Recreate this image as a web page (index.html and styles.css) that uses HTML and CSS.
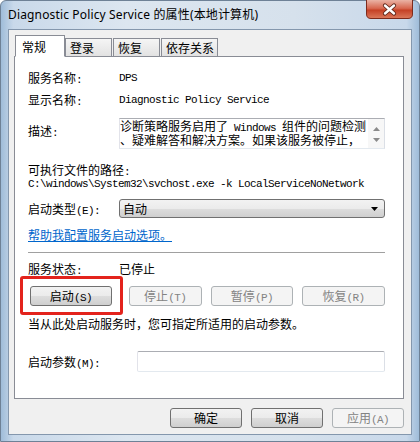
FILE: index.html
```html
<!DOCTYPE html>
<html lang="zh-CN">
  <head>
    <meta charset="UTF-8" />
    <title>Diagnostic Policy Service 的属性(本地计算机)</title>
    <link rel="stylesheet" href="styles.css">
  </head>
  <body>
    <div class="window">
      <div class="titlebar">
        <span class="caption">Diagnostic Policy Service 的属性(本地计算机)</span>
        <div class="close">
          <svg width="47" height="19" viewBox="0 0 47 19">
            <defs>
              <linearGradient id="cg" x1="0" y1="0" x2="0" y2="1">
                <stop offset="0" stop-color="#eab3a5" />
                <stop offset="0.45" stop-color="#d7674f" />
                <stop offset="0.55" stop-color="#c54126" />
                <stop offset="1" stop-color="#dc7a5c" />
              </linearGradient>
            </defs>
            <path d="M0.5 0 V14 Q0.5 18.5 5 18.5 H42 Q46.5 18.5 46.5 14 V0" fill="url(#cg)" stroke="#7d2b1c" />
            <path d="M19 5.5 L28 13.5 M28 5.5 L19 13.5" stroke="#5a2418" stroke-width="4.2" stroke-linecap="round" />
            <path d="M19 5.5 L28 13.5 M28 5.5 L19 13.5" stroke="#fff" stroke-width="2.4" stroke-linecap="round" />
          </svg>
        </div>
      </div>

      <div class="client">
        <div class="tabs">
          <div class="tab active">常规</div>
          <div class="tab">登录</div>
          <div class="tab">恢复</div>
          <div class="tab">依存关系</div>
        </div>

        <div class="panel">
          <div class="row row-name">
            <span class="label">服务名称<span class="en">:</span></span>
            <span class="en">DPS</span>
          </div>
          <div class="row row-display">
            <span class="label">显示名称<span class="en">:</span></span>
            <span class="en">Diagnostic Policy Service</span>
          </div>
          <div class="row row-desc">
            <span class="label desc-label">描述<span class="en">:</span></span>
            <div class="textbox">
              <div class="desc-text">
                <div class="desc-line">诊断策略服务启用了<span class="en"> Windows </span>组件的问题检测</div>
                <div class="desc-line">、疑难解答和解决方案。如果该服务被停止，</div>
              </div>
              <div class="scroll">
                <svg width="7" height="4" viewBox="0 0 7 4"><path d="M0 4 L3.5 0 L7 4 Z" fill="#8a8a8a" /></svg>
                <svg width="7" height="4" viewBox="0 0 7 4"><path d="M0 0 L3.5 4 L7 0 Z" fill="#8a8a8a" /></svg>
              </div>
            </div>
          </div>
          <div class="path-label">可执行文件的路径<span class="en">:</span></div>
          <div class="path en">C:\windows\System32\svchost.exe -k LocalServiceNoNetwork</div>
          <div class="row row-type">
            <span class="label">启动类型<span class="en">(E):</span></span>
            <div class="select">
              <span>自动</span>
              <svg width="7" height="4" viewBox="0 0 7 4"><path d="M0 0 L3.5 4 L7 0 Z" fill="#000" /></svg>
            </div>
          </div>
          <a class="help" href="#">帮助我配置服务启动选项。</a>
          <div class="sep"></div>
          <div class="row row-status">
            <span class="label">服务状态<span class="en">:</span></span>
            <span>已停止</span>
          </div>
          <div class="btn-row">
            <button class="btn b-start">启动<span class="en">(S)</span></button>
            <button class="btn b-stop" disabled>停止<span class="en">(T)</span></button>
            <button class="btn b-pause" disabled>暂停<span class="en">(P)</span></button>
            <button class="btn b-resume" disabled>恢复<span class="en">(R)</span></button>
            <div class="mark"></div>
          </div>
          <div class="note">当从此处启动服务时，您可指定所适用的启动参数。</div>
          <div class="row row-params">
            <span class="label params-label">启动参数<span class="en">(M):</span></span>
            <div class="input"></div>
          </div>
        </div>

        <div class="footer">
          <button class="btn">确定</button>
          <button class="btn">取消</button>
          <button class="btn" disabled>应用<span class="en">(A)</span></button>
        </div>
      </div>
    </div>
  </body>
</html>
```

FILE: styles.css
```css
* {
  box-sizing: border-box;
}
body {
  margin: 0;
  font-family: "Noto Sans CJK SC", sans-serif;
  font-size: 12px;
  color: #000;
}
.en {
  font-family: "Liberation Mono", monospace;
  font-size: 11px;
  letter-spacing: -0.6px;
  line-height: 10px;
}
.window {
  width: 420px;
  height: 442px;
  display: flex;
  flex-direction: column;
  padding: 0 7px 6px 7px;
  border: 1px solid #6e8196;
  border-radius: 6px 6px 0 0;
  background: linear-gradient(90deg, #9fbcd9 0, #c9d9ea 3%, #dce6f0 30%, #d6e1ec 70%, #c8d8ea 97%, #9fbcd9 100%);
}
.titlebar {
  height: 28px;
  display: flex;
  justify-content: space-between;
  align-items: flex-start;
}
.caption {
  font-family: "Noto Sans", "Noto Sans CJK SC", sans-serif;
  font-size: 12px;
  line-height: 28px;
  letter-spacing: 0.15px;
}
.close {
  margin-top: -1px;
  margin-right: -1px;
  height: 19px;
}
.close svg {
  display: block;
}
.client {
  flex: 1;
  background: #f0f0f0;
  border: 1px solid #8497ad;
  padding: 5px 7px 0 5px;
}
.tabs {
  display: flex;
  align-items: flex-end;
  height: 22px;
  padding-left: 1px;
  margin-bottom: -1px;
  position: relative;
  z-index: 1;
}
.tab {
  height: 19px;
  min-width: 47px;
  padding: 0 3px 0 4px;
  margin-left: 1px;
  line-height: 17px;
  border: 1px solid #898c95;
  background: linear-gradient(#f5f5f5, #e2e2e2);
}
.tab.active {
  height: 22px;
  min-width: 50px;
  padding-left: 6px;
  margin-left: 0;
  line-height: 21px;
  border-bottom-color: #fff;
  background: #fff;
}
.tab.active + .tab {
  margin-left: 0;
}
.panel {
  height: 343px;
  background: #fff;
  border: 1px solid #898c95;
  padding: 13px 18px 0 13px;
  display: flex;
  flex-direction: column;
}
.row {
  display: flex;
  align-items: center;
  height: 16px;
  line-height: 16px;
  flex: none;
}
.label {
  width: 91px;
  flex: none;
}
.row-display {
  margin-top: 6px;
}
.row-desc {
  margin-top: 10px;
  height: 31px;
  align-items: flex-start;
}
.desc-label {
  padding-top: 5px;
}
.textbox {
  width: 266px;
  height: 31px;
  display: flex;
  border: 1px solid #abadb3;
  border-left-color: #e2e3ea;
  border-right-color: #dbdfe6;
  border-bottom-color: #e3e9ef;
  background: #fff;
}
.desc-text {
  flex: 1;
  white-space: nowrap;
}
.desc-line {
  height: 14px;
  line-height: 14px;
}
.scroll {
  width: 16px;
  display: flex;
  flex-direction: column;
  justify-content: space-between;
  align-items: center;
  padding: 8px 0 6px;
  background: #f7f7f7;
}
.scroll svg {
  display: block;
}
.path-label {
  margin-top: 14px;
  height: 14px;
  line-height: 14px;
  flex: none;
}
.path {
  height: 14px;
  line-height: 14px;
  white-space: nowrap;
  flex: none;
}
.row-type {
  margin-top: 8px;
  height: 19px;
}
.select {
  width: 266px;
  height: 19px;
  display: flex;
  justify-content: space-between;
  align-items: center;
  padding: 0 6px 0 3px;
  border: 1px solid #707070;
  border-radius: 3px;
  background: linear-gradient(#f2f2f2, #ebebeb 50%, #dddddd 51%, #cfcfcf);
}
.help {
  margin-top: 9px;
  height: 16px;
  line-height: 16px;
  color: #0066cc;
  align-self: flex-start;
}
.sep {
  margin-top: 9px;
  height: 2px;
  flex: none;
  border-top: 1px solid #a0a0a0;
  border-bottom: 1px solid #fff;
}
.row-status {
  margin-top: 7px;
}
.btn-row {
  margin-top: 9px;
  display: flex;
  position: relative;
  flex: none;
}
.btn {
  height: 20px;
  padding: 0;
  font-family: inherit;
  font-size: 12px;
  line-height: 16px;
  color: #000;
  border: 1px solid #707070;
  border-radius: 3px;
  background: linear-gradient(#f2f2f2, #ebebeb 50%, #dddddd 51%, #cfcfcf);
}
.btn[disabled] {
  color: #838383;
  border-color: #adb2b5;
  background: #f4f4f4;
}
.b-start {
  width: 82px;
  margin-left: 2px;
}
.b-stop {
  width: 73px;
  margin-left: 17px;
}
.b-pause {
  width: 83px;
  margin-left: 9px;
}
.b-resume {
  width: 83px;
  margin-left: 9px;
}
.mark {
  position: absolute;
  left: -8px;
  top: -10px;
  width: 103px;
  height: 39px;
  border: 3px solid #e3231c;
  border-radius: 3px;
}
.note {
  margin-top: 10px;
  height: 16px;
  line-height: 16px;
  flex: none;
}
.row-params {
  margin-top: 19px;
  height: 21px;
}
.params-label {
  width: 109px;
}
.input {
  width: 249px;
  height: 21px;
  border: 1px solid #abadb3;
  border-left-color: #e2e3ea;
  border-right-color: #dbdfe6;
  border-bottom-color: #e3e9ef;
  border-radius: 2px;
}
.footer {
  margin-top: 9px;
  display: flex;
  justify-content: flex-end;
  gap: 9px;
}
.footer .btn {
  width: 72px;
}
```
